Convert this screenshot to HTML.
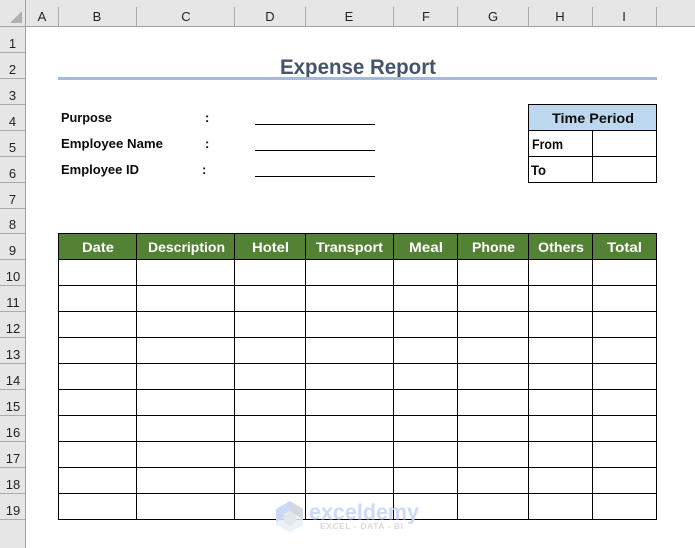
<!DOCTYPE html>
<html><head><meta charset="utf-8"><title>Expense Report</title>
<style>
html,body{margin:0;padding:0;background:#fff;width:695px;height:548px;overflow:hidden}
svg{display:block}
text{font-family:"Liberation Sans",sans-serif}
.h{font-size:13px;fill:#222;text-anchor:middle}
.b{font-size:13px;font-weight:bold;fill:#0c0c0c}
.w{font-size:14px;font-weight:bold;fill:#fff}
</style></head><body>
<svg width="695" height="548" viewBox="0 0 695 548" xmlns="http://www.w3.org/2000/svg" shape-rendering="crispEdges">
<rect width="695" height="548" fill="#fff"/>
<rect width="695" height="26" fill="#e6e6e6"/>
<rect width="25" height="548" fill="#e6e6e6"/>
<rect x="0" y="26" width="695" height="1" fill="#a3a3a3"/>
<rect x="25" y="0" width="1" height="548" fill="#a3a3a3"/>
<polygon points="22,11 22,23 10,23" fill="#b0b0b0" shape-rendering="auto"/>
<g fill="#ababab">
<rect x="58" y="7" width="1" height="19"/><rect x="136" y="7" width="1" height="19"/><rect x="234" y="7" width="1" height="19"/><rect x="305" y="7" width="1" height="19"/><rect x="393" y="7" width="1" height="19"/><rect x="457" y="7" width="1" height="19"/><rect x="528" y="7" width="1" height="19"/><rect x="592" y="7" width="1" height="19"/><rect x="656" y="7" width="1" height="19"/>
<rect x="0" y="52" width="25" height="1"/><rect x="0" y="78" width="25" height="1"/><rect x="0" y="104" width="25" height="1"/><rect x="0" y="130" width="25" height="1"/><rect x="0" y="156" width="25" height="1"/><rect x="0" y="182" width="25" height="1"/><rect x="0" y="208" width="25" height="1"/><rect x="0" y="233" width="25" height="1"/><rect x="0" y="259" width="25" height="1"/><rect x="0" y="285" width="25" height="1"/><rect x="0" y="311" width="25" height="1"/><rect x="0" y="337" width="25" height="1"/><rect x="0" y="363" width="25" height="1"/><rect x="0" y="389" width="25" height="1"/><rect x="0" y="415" width="25" height="1"/><rect x="0" y="441" width="25" height="1"/><rect x="0" y="467" width="25" height="1"/><rect x="0" y="493" width="25" height="1"/><rect x="0" y="519" width="25" height="1"/>
</g>
<g class="cols">
<text class="h" x="42" y="21">A</text><text class="h" x="97" y="21">B</text><text class="h" x="186" y="21">C</text><text class="h" x="270" y="21">D</text><text class="h" x="349" y="21">E</text><text class="h" x="426" y="21">F</text><text class="h" x="493" y="21">G</text><text class="h" x="560" y="21">H</text><text class="h" x="624" y="21">I</text>
</g>
<g>
<text class="h" x="12.5" y="48">1</text><text class="h" x="12.5" y="74">2</text><text class="h" x="12.5" y="100">3</text><text class="h" x="12.5" y="126">4</text><text class="h" x="12.5" y="152">5</text><text class="h" x="12.5" y="178">6</text><text class="h" x="12.5" y="204">7</text><text class="h" x="12.5" y="229">8</text><text class="h" x="12.5" y="255">9</text><text class="h" x="13" y="281">10</text><text class="h" x="13" y="307">11</text><text class="h" x="13" y="333">12</text><text class="h" x="13" y="359">13</text><text class="h" x="13" y="385">14</text><text class="h" x="13" y="411">15</text><text class="h" x="13" y="437">16</text><text class="h" x="13" y="463">17</text><text class="h" x="13" y="489">18</text><text class="h" x="13" y="515">19</text>
</g>

<text x="280" y="74" font-size="21" font-weight="bold" fill="#44546a" textLength="156" lengthAdjust="spacingAndGlyphs">Expense Report</text>
<rect x="58" y="77" width="599" height="3" fill="#a5b8de"/>

<text class="b" x="61" y="122" textLength="51" lengthAdjust="spacingAndGlyphs">Purpose</text>
<text class="b" x="61" y="148" textLength="102" lengthAdjust="spacingAndGlyphs">Employee Name</text>
<text class="b" x="61" y="174" textLength="78" lengthAdjust="spacingAndGlyphs">Employee ID</text>
<text class="b" x="205" y="122">:</text><text class="b" x="205" y="148">:</text><text class="b" x="202" y="174">:</text>
<g fill="#000"><rect x="255" y="124" width="120" height="1"/><rect x="255" y="150" width="120" height="1"/><rect x="255" y="176" width="120" height="1"/></g>

<rect x="528" y="104" width="129" height="27" fill="#bdd7ee"/>
<g fill="#000">
<rect x="528" y="104" width="129" height="1"/><rect x="528" y="130" width="129" height="1"/><rect x="528" y="156" width="129" height="1"/><rect x="528" y="182" width="129" height="1"/>
<rect x="528" y="104" width="1" height="79"/><rect x="656" y="104" width="1" height="79"/><rect x="592" y="130" width="1" height="53"/>
</g>
<text class="b" x="552" y="123" style="font-size:14px" textLength="82" lengthAdjust="spacingAndGlyphs">Time Period</text>
<text class="b" x="532" y="149" style="font-size:14px" textLength="31" lengthAdjust="spacingAndGlyphs">From</text>
<text class="b" x="531" y="175" style="font-size:14px" textLength="15" lengthAdjust="spacingAndGlyphs">To</text>

<rect x="58" y="233" width="599" height="27" fill="#548235"/>
<g fill="#000">
<rect x="58" y="233" width="599" height="1"/><rect x="58" y="259" width="599" height="1"/><rect x="58" y="285" width="599" height="1"/><rect x="58" y="311" width="599" height="1"/><rect x="58" y="337" width="599" height="1"/><rect x="58" y="363" width="599" height="1"/><rect x="58" y="389" width="599" height="1"/><rect x="58" y="415" width="599" height="1"/><rect x="58" y="441" width="599" height="1"/><rect x="58" y="467" width="599" height="1"/><rect x="58" y="493" width="599" height="1"/><rect x="58" y="519" width="599" height="1"/>
<rect x="58" y="233" width="1" height="287"/><rect x="136" y="233" width="1" height="287"/><rect x="234" y="233" width="1" height="287"/><rect x="305" y="233" width="1" height="287"/><rect x="393" y="233" width="1" height="287"/><rect x="457" y="233" width="1" height="287"/><rect x="528" y="233" width="1" height="287"/><rect x="592" y="233" width="1" height="287"/><rect x="656" y="233" width="1" height="287"/>
</g>
<text class="w" x="82" y="252" textLength="32" lengthAdjust="spacingAndGlyphs">Date</text>
<text class="w" x="148" y="252" textLength="77" lengthAdjust="spacingAndGlyphs">Description</text>
<text class="w" x="252" y="252" textLength="37" lengthAdjust="spacingAndGlyphs">Hotel</text>
<text class="w" x="316" y="252" textLength="67" lengthAdjust="spacingAndGlyphs">Transport</text>
<text class="w" x="409" y="252" textLength="34" lengthAdjust="spacingAndGlyphs">Meal</text>
<text class="w" x="472" y="252" textLength="43" lengthAdjust="spacingAndGlyphs">Phone</text>
<text class="w" x="538" y="252" textLength="46" lengthAdjust="spacingAndGlyphs">Others</text>
<text class="w" x="607" y="252" textLength="35" lengthAdjust="spacingAndGlyphs">Total</text>

<g shape-rendering="auto">
<polygon points="290,501 303,509 303,525 290,532 276,525 276,509" fill="#e8eef6" fill-opacity=".85"/>
<polygon points="290,501 303,509 303,519 296,515 290,511" fill="#d0d4dc" fill-opacity=".9"/>
<polygon points="290,501 276,509 276,522 284,518 284,514 290,511" fill="#c8d6f5" fill-opacity=".9"/>
<polygon points="290,511 296,515 296,522 290,526 284,522 284,515" fill="#e4e6ea"/>
<text x="309" y="519.5" font-size="22.5" font-weight="bold" fill="#c6d5f6" fill-opacity=".88" textLength="110" lengthAdjust="spacingAndGlyphs">exceldemy</text>
<text x="320" y="529" font-size="8.5" font-weight="bold" fill="#d9dadd" textLength="83" lengthAdjust="spacing">EXCEL - DATA - BI</text>
</g>
</svg>
</body></html>
